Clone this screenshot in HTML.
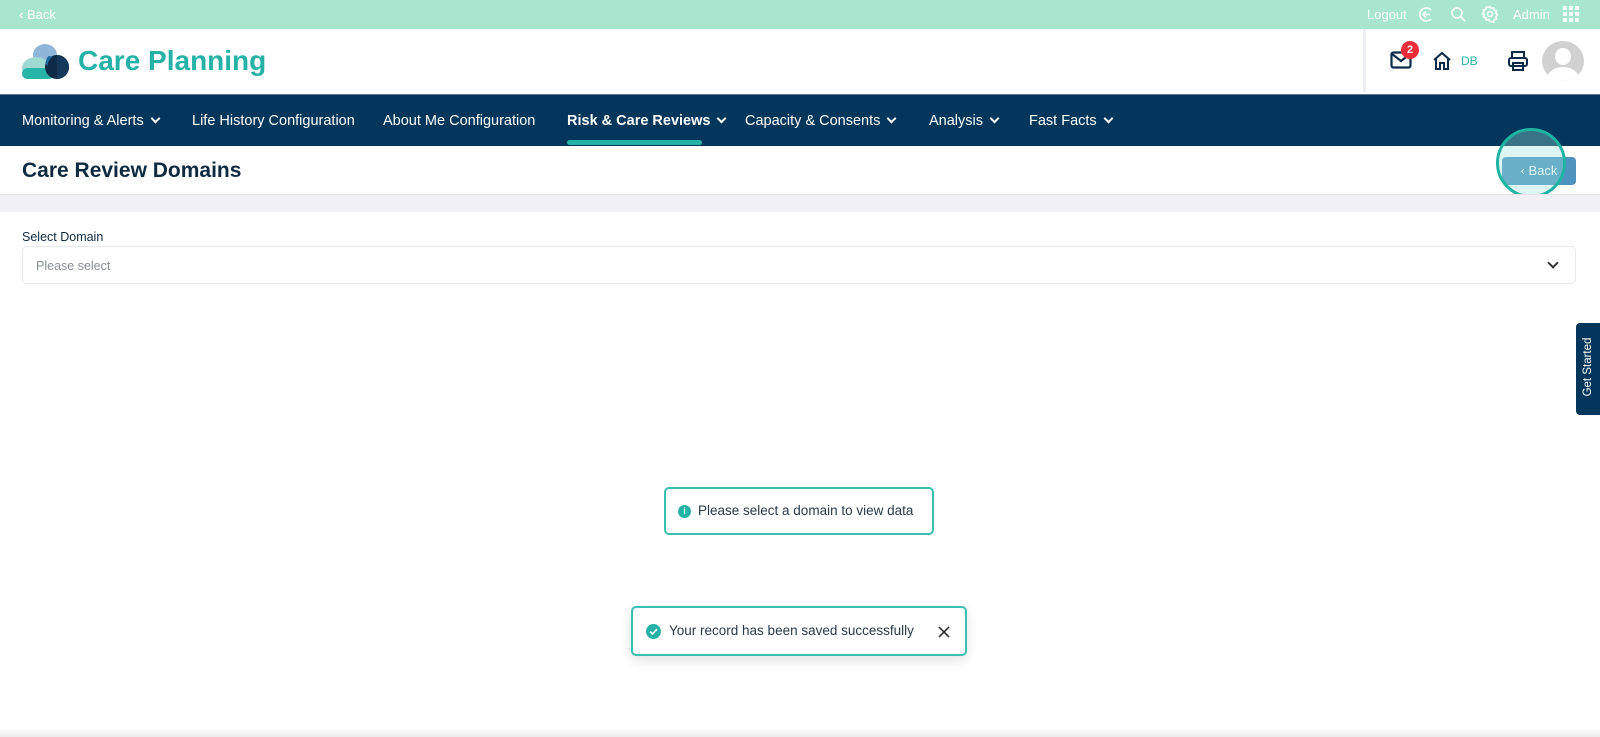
<!DOCTYPE html>
<html><head><meta charset="utf-8"><style>
*{margin:0;padding:0;box-sizing:border-box}
body{width:1600px;height:737px;overflow:hidden;background:#fff;font-family:"Liberation Sans",sans-serif;position:relative;color:#0e2a40}
.abs{position:absolute}
.top{left:0;top:0;width:1600px;height:29px;background:#a8e6d0;color:#fff;font-size:13px}
.hdr{left:0;top:29px;width:1600px;height:65px;background:#fff}
.nav{left:0;top:94px;width:1600px;height:52px;background:#02365a;border-top:1px solid #5a7d95}
.nav span{position:absolute;top:18px;color:#fff;font-size:14.5px;white-space:nowrap}
.chev{display:inline-block;width:7px;height:7px;border-right:2px solid #fff;border-bottom:2px solid #fff;transform:rotate(45deg);margin-left:8px;position:relative;top:-3px}
</style></head><body>
<div class="abs top">
 <span class="abs" style="left:19px;top:7px">‹ Back</span>
 <span class="abs" style="left:1367px;top:7px">Logout</span>
 <svg class="abs" style="left:1418px;top:6px" width="17" height="17" viewBox="0 0 17 17" fill="none" stroke="#fff" stroke-width="1.6"><path d="M13 4A6.5 6.5 0 1 0 13 13"/><path d="M12 8.5H5M8 5.5L5 8.5L8 11.5"/></svg>
 <svg class="abs" style="left:1450px;top:6px" width="17" height="17" viewBox="0 0 17 17" fill="none" stroke="#fff" stroke-width="1.6"><circle cx="7" cy="7" r="5"/><path d="M11 11L15 15"/></svg>
 <svg class="abs" style="left:1481px;top:5px" width="18" height="18" viewBox="0 0 18 18" fill="none" stroke="#fff" stroke-width="1.6"><circle cx="9" cy="9" r="2.5"/><path d="M9 1.5l1.3 2 2.3-.6.6 2.3 2.3.7-.6 2.3 1.6 1.8-1.6 1.8.6 2.3-2.3.7-.6 2.3-2.3-.6L9 16.5l-1.3-2-2.3.6-.6-2.3-2.3-.7.6-2.3L1.5 9l1.6-1.8-.6-2.3 2.3-.7.6-2.3 2.3.6z"/></svg>
 <span class="abs" style="left:1513px;top:7px">Admin</span>
 <svg class="abs" style="left:1563px;top:6px" width="17" height="17" viewBox="0 0 17 17" fill="#fff"><rect x="0" y="0" width="4" height="4"/><rect x="6" y="0" width="4" height="4"/><rect x="12" y="0" width="4" height="4"/><rect x="0" y="6" width="4" height="4"/><rect x="6" y="6" width="4" height="4"/><rect x="12" y="6" width="4" height="4"/><rect x="0" y="12" width="4" height="4"/><rect x="6" y="12" width="4" height="4"/><rect x="12" y="12" width="4" height="4"/></svg>
</div>
<div class="abs hdr">
 <svg class="abs" style="left:22px;top:15px" width="48" height="36" viewBox="0 0 48 36"><ellipse cx="23" cy="11" rx="12" ry="11" fill="#8fb5d8"/><ellipse cx="14" cy="24" rx="14" ry="11" fill="#9fd9d2"/><rect x="0" y="24" width="32" height="11" rx="5.5" fill="#27b5a8"/><circle cx="35" cy="23" r="12" fill="#0d2b48"/><path d="M35 11a12 12 0 0 1 0 24z" fill="#14385a"/><path d="M23.5 20a12 12 0 0 1 3-8a11 11 0 0 1 4 1a12 12 0 0 0-5 9z" fill="#1d6aa0"/></svg>
 <div class="abs" style="left:78px;top:16px;font-size:28px;font-weight:bold;color:#25b2a6">Care Planning</div>
 <div class="abs" style="left:1363px;top:0;width:3px;height:63px;background:#eceef1"></div>
 <svg class="abs" style="left:1390px;top:22px" width="22" height="18" viewBox="0 0 22 18" fill="none" stroke="#0d2b48" stroke-width="2.2"><rect x="1.5" y="1.5" width="19" height="15" rx="2"/><path d="M2 3l9 7 9-7"/></svg>
 <div class="abs" style="left:1401px;top:12px;width:18px;height:18px;border-radius:50%;background:#ee2d3a;color:#fff;font-size:11px;font-weight:bold;text-align:center;line-height:18px">2</div>
 <svg class="abs" style="left:1432px;top:22px" width="20" height="20" viewBox="0 0 20 20" fill="none" stroke="#0d2b48" stroke-width="2"><path d="M2 9L10 2l8 7M4 8v10h4v-6h4v6h4V8"/></svg>
 <span class="abs" style="left:1461px;top:25px;font-size:12px;color:#25b2a6">DB</span>
 <svg class="abs" style="left:1507px;top:21px" width="22" height="22" viewBox="0 0 22 22" fill="none" stroke="#0d2b48" stroke-width="2"><rect x="5" y="2" width="12" height="6"/><rect x="2" y="8" width="18" height="8" rx="2"/><rect x="6" y="13" width="10" height="7"/></svg>
 <div class="abs" style="left:1542px;top:12px;width:42px;height:40px;border-radius:50%;background:#d1d1d1;overflow:hidden"><div style="position:absolute;left:13px;top:7px;width:16px;height:17px;border-radius:50%;background:#fff"></div><div style="position:absolute;left:5px;top:26px;width:32px;height:24px;border-radius:50%;background:#fff"></div></div>
</div>
<div class="abs nav">
 <span style="left:22px">Monitoring &amp; Alerts<i class="chev"></i></span>
 <span style="left:192px">Life History Configuration</span>
 <span style="left:383px">About Me Configuration</span>
 <span style="left:567px;font-weight:bold">Risk &amp; Care Reviews<i class="chev"></i></span>
 <span style="left:745px">Capacity &amp; Consents<i class="chev"></i></span>
 <span style="left:929px">Analysis<i class="chev"></i></span>
 <span style="left:1029px">Fast Facts<i class="chev"></i></span>
 <div class="abs" style="left:567px;top:45px;width:135px;height:5px;border-radius:3px;background:#25b2a6"></div>
</div>
<div class="abs" style="left:22px;top:159px;font-size:21px;font-weight:bold;color:#0e2a40">Care Review Domains</div>
<div class="abs" style="left:1502px;top:157px;width:74px;height:28px;border-radius:4px;background:#4d93bd;color:#fff;font-size:13px;line-height:28px;text-align:center">‹ Back</div>
<div class="abs" style="left:1496px;top:128px;width:70px;height:70px;border-radius:50%;border:3px solid #1fb3a3;background:rgba(160,230,220,0.35)"></div>
<div class="abs" style="left:0;top:194px;width:1600px;height:18px;background:#f1f1f5;border-top:1px solid #e3e3e8"></div>
<div class="abs" style="left:22px;top:230px;font-size:12.5px;color:#0e2a40">Select Domain</div>
<div class="abs" style="left:22px;top:246px;width:1554px;height:38px;border:1px solid #e6e8ec;border-radius:5px">
 <span class="abs" style="left:13px;top:12px;font-size:12.5px;color:#8a8f96">Please select</span>
 <i class="abs" style="right:18px;top:12px;width:8px;height:8px;border-right:2px solid #333;border-bottom:2px solid #333;transform:rotate(45deg)"></i>
</div>
<div class="abs" style="left:1576px;top:323px;width:24px;height:92px;background:#02365a;border-radius:4px 0 0 4px"><span class="abs" style="left:-30px;top:38px;width:84px;transform:rotate(-90deg);color:#fff;font-size:11.5px;text-align:center;white-space:nowrap">Get Started</span></div>
<div class="abs" style="left:664px;top:487px;width:270px;height:48px;border:2px solid #3bbfae;border-radius:5px">
 <div class="abs" style="left:12px;top:16px;width:13px;height:13px;border-radius:50%;background:#25b2a6;color:#fff;font-size:9px;font-weight:bold;text-align:center;line-height:13px">i</div>
 <span class="abs" style="left:32px;top:14px;font-size:13.5px;color:#2a3a48;white-space:nowrap">Please select a domain to view data</span>
</div>
<div class="abs" style="left:631px;top:606px;width:336px;height:50px;border:2px solid #3bbfae;border-radius:5px;box-shadow:0 4px 12px rgba(0,0,0,0.12);background:#fff">
 <svg class="abs" style="left:13px;top:16px" width="15" height="15" viewBox="0 0 15 15"><circle cx="7.5" cy="7.5" r="7.5" fill="#25b2a6"/><path d="M4 7.6l2.4 2.3 4.6-4.6" stroke="#fff" stroke-width="1.8" fill="none"/></svg>
 <span class="abs" style="left:36px;top:15px;font-size:13.5px;color:#2a3a48;white-space:nowrap">Your record has been saved successfully</span>
 <svg class="abs" style="left:305px;top:18px" width="12" height="12" viewBox="0 0 12 12" stroke="#222" stroke-width="1.5"><path d="M1 1l10 10M11 1L1 11"/></svg>
</div>
<div class="abs" style="left:0;top:728px;width:1600px;height:9px;background:linear-gradient(#fff,#ececec)"></div>
</body></html>
